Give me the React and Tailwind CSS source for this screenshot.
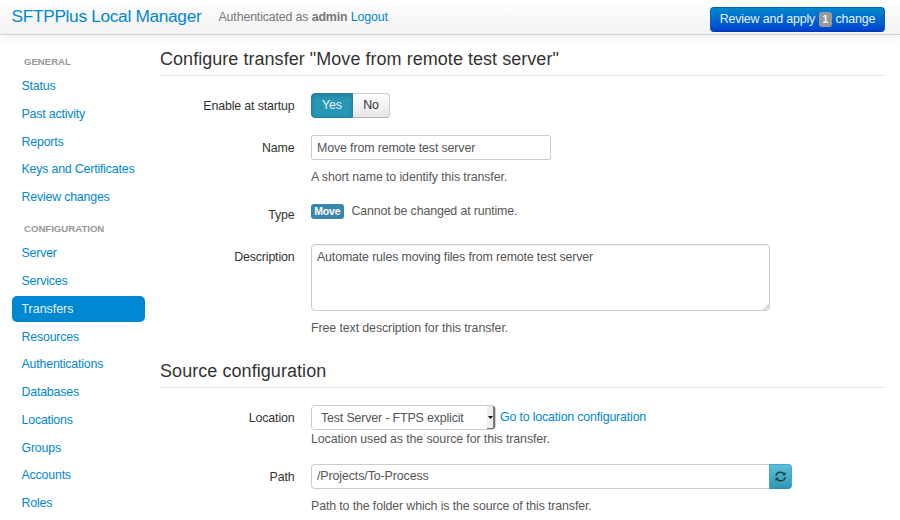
const general = ['Status', 'Past activity', 'Reports', 'Keys and Certificates', 'Review changes'];
const configuration = ['Server', 'Services', 'Transfers', 'Resources', 'Authentications', 'Databases', 'Locations', 'Groups', 'Accounts', 'Roles'];

function NavGroup({ title, items, active }) {
  return (
    <div className="tracking-[-0.2px]">
      <div className="h-[28.5px] pl-[12.5px] pt-[7px] text-[9.6px] leading-[20px] font-bold tracking-normal text-[#999]">{title}</div>
      {items.map((item) => (
        <div key={item} className="h-[27.75px]">
          <a
            href="#"
            className={
              item === active
                ? 'block h-[26px] rounded-[5px] bg-[#0088d2] pl-[10px] leading-[26px] text-[#e8f4fb] tracking-normal'
                : 'block h-[26px] pl-[10px] leading-[26px] text-[#0088d2]'
            }
          >
            {item}
          </a>
        </div>
      ))}
    </div>
  );
}

function Row({ label, className, children }) {
  return (
    <div className={`flex ${className}`}>
      <div className="w-[134.5px] shrink-0 text-right leading-[26px] text-[#333]">{label}</div>
      <div className="ml-[16.5px] flex-1 text-[#595959]">{children}</div>
    </div>
  );
}

export default function App() {
  return (
    <div className="flex h-[520px] w-[900px] flex-col overflow-hidden bg-white font-['Liberation_Sans',Arial,sans-serif] text-[12.4px] tracking-[-0.15px] whitespace-nowrap">
      <header className="flex h-[35px] shrink-0 items-start border-b border-[#d4d4d4] bg-gradient-to-b from-white to-[#f2f2f2] pl-[11.5px] pr-[15px] shadow-[0_1px_9px_rgba(0,0,0,0.1)]">
        <a href="#" className="w-[207px] text-[17.3px] leading-[33px] tracking-[-0.32px] text-[#0088d2]">SFTPPlus Local Manager</a>
        <div className="leading-[34px] text-[#777]">
          Authenticated as <b>admin</b> <a href="#" className="text-[#0088d2]">Logout</a>
        </div>
        <button className="mt-[7px] ml-auto flex h-[25px] w-[175px] items-center justify-center gap-[4px] rounded-[4px] border border-[#0062bd] border-b-[#003ba8] bg-gradient-to-b from-[#0088cc] to-[#003fd0] text-[#e8f2fb]">
          Review and apply
          <span className="flex h-[15px] w-[12.5px] items-center justify-center rounded-[3px] bg-[#999] text-[11px] font-bold">1</span>
          change
        </button>
      </header>
      <div className="flex flex-1">
        <nav className="ml-[11.5px] w-[133px] shrink-0 pt-[9.6px]">
          <NavGroup title="GENERAL" items={general} />
          <NavGroup title="CONFIGURATION" items={configuration} active="Transfers" />
        </nav>
        <main className="ml-[15.5px] w-[725px]">
          <h1 className="h-[41px] border-b border-[#e5e5e5] pt-[6px] text-[18px] leading-[36px] tracking-[0.04px] text-[#333]">Configure transfer "Move from remote test server"</h1>
          <Row label="Enable at startup" className="mt-[17px] h-[42px]">
            <div className="flex h-[25px] w-[79px]">
              <button className="h-full w-[42px] rounded-l-[4px] border border-[#24809c] bg-[#2896b5] text-[#e4f4f8] shadow-[inset_0_2px_4px_rgba(0,0,0,0.15)]">Yes</button>
              <button className="h-full w-[37px] rounded-r-[4px] border border-l-0 border-[#ccc] border-b-[#b3b3b3] bg-gradient-to-b from-white to-[#e6e6e6] text-[#333]">No</button>
            </div>
          </Row>
          <Row label="Name" className="h-[67px]">
            <div className="h-[25px] w-[240px] rounded-[2px] border border-[#ccc] pl-[5px] leading-[24px] tracking-[-0.13px] text-[#555]">Move from remote test server</div>
            <div className="mt-[7px] leading-[20px] tracking-[-0.11px]">A short name to identify this transfer.</div>
          </Row>
          <Row label="Type" className="h-[42px]">
            <div className="flex h-[19px] items-center gap-[8px]">
              <span className="h-[15px] w-[32.5px] rounded-[3px] bg-[#3a87ad] text-center text-[10.5px] leading-[15px] font-bold text-white">Move</span>
              <span>Cannot be changed at runtime.</span>
            </div>
          </Row>
          <Row label="Description" className="h-[103px]">
            <div className="flex h-[67px] w-[459px] items-start justify-between rounded-[4px] border border-[#ccc] pl-[5px] leading-[24px] text-[#555] shadow-[inset_0_1px_1px_rgba(0,0,0,0.06)]">
              Automate rules moving files from remote test server
              <svg className="h-[7px] w-[7px] self-end" viewBox="0 0 7 7"><path d="M7 0V7H0Z" fill="#dedede" /></svg>
            </div>
            <div className="mt-[7px] leading-[20px] tracking-[-0.1px]">Free text description for this transfer.</div>
          </Row>
          <h2 className="h-[41px] border-b border-[#e5e5e5] pt-[6px] text-[18px] leading-[36px] tracking-[0.06px] text-[#333]">Source configuration</h2>
          <Row label="Location" className="mt-[17px] h-[59px]">
            <div className="flex h-[25px]">
              <div className="flex h-[25px] w-[185px] justify-between rounded-[4px] border border-[#ccc] pl-[9px] leading-[24px] text-[#555]">
                Test Server - FTPS explicit
                <span className="flex h-[23px] w-[8px] items-center justify-center rounded-r-[2px] border-r-2 border-b border-[#777] bg-[#eee]">
                  <svg className="h-[3px] w-[5px]" viewBox="0 0 5 3"><path d="M0 0H5L2.5 3Z" fill="#111" /></svg>
                </span>
              </div>
              <a href="#" className="ml-[4px] leading-[24px] tracking-[-0.17px] text-[#0088d2]">Go to location configuration</a>
            </div>
            <div className="-mt-[1px] leading-[20px] tracking-[-0.11px]">Location used as the source for this transfer.</div>
          </Row>
          <Row label="Path" className="h-[56px]">
            <div className="flex h-[25px]">
              <div className="w-[458px] rounded-l-[4px] border border-r-0 border-[#ccc] pl-[5px] leading-[23px] tracking-[-0.1px] text-[#555]">/Projects/To-Process</div>
              <button className="flex w-[23px] items-center justify-center rounded-r-[4px] border border-[#4aa7c1] border-b-[#2c8ba7] bg-gradient-to-b from-[#5bc0de] to-[#2f96b4]">
                <svg className="-mt-px h-[11px] w-[11px]" viewBox="0 0 11 11"><path d="M.9 5C1.300 2.600 3.200 1.200 5.400 1.200C7 1.200 8.200 1.800 9 2.800M10.100 6C9.700 8.400 7.800 9.800 5.600 9.800C4 9.800 2.800 9.200 2 8.200" fill="none" stroke="#263c43" strokeWidth="1.500" /><path d="M10.500 .7V4.200H7ZM.5 10.300V6.800H4Z" fill="#263c43" /></svg>
              </button>
            </div>
            <div className="mt-[7px] leading-[20px] tracking-[-0.13px]">Path to the folder which is the source of this transfer.</div>
          </Row>
        </main>
      </div>
    </div>
  );
}
